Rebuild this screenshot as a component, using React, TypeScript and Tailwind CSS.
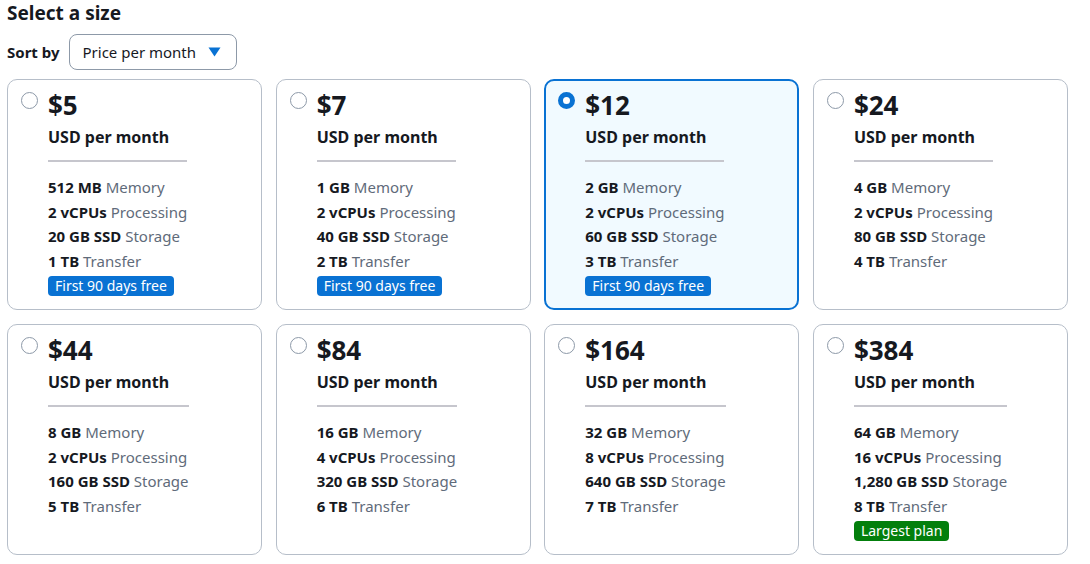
import React, { useState } from "react";

type Plan = {
  price: string;
  memory: string;
  cpus: string;
  storage: string;
  transfer: string;
  badge?: "free" | "largest";
};

const plans: Plan[] = [
  { price: "$5", memory: "512 MB", cpus: "2 vCPUs", storage: "20 GB SSD", transfer: "1 TB", badge: "free" },
  { price: "$7", memory: "1 GB", cpus: "2 vCPUs", storage: "40 GB SSD", transfer: "2 TB", badge: "free" },
  { price: "$12", memory: "2 GB", cpus: "2 vCPUs", storage: "60 GB SSD", transfer: "3 TB", badge: "free" },
  { price: "$24", memory: "4 GB", cpus: "2 vCPUs", storage: "80 GB SSD", transfer: "4 TB" },
  { price: "$44", memory: "8 GB", cpus: "2 vCPUs", storage: "160 GB SSD", transfer: "5 TB" },
  { price: "$84", memory: "16 GB", cpus: "4 vCPUs", storage: "320 GB SSD", transfer: "6 TB" },
  { price: "$164", memory: "32 GB", cpus: "8 vCPUs", storage: "640 GB SSD", transfer: "7 TB" },
  { price: "$384", memory: "64 GB", cpus: "16 vCPUs", storage: "1,280 GB SSD", transfer: "8 TB", badge: "largest" },
];

const SpecLine = ({ value, label }: { value: string; label: string }) => (
  <p className="h-[24.5px] leading-[24.5px] text-[15px] whitespace-nowrap">
    <span className="font-bold text-[#16191f]">{value}</span>{" "}
    <span className="text-[#5f6b7a]">{label}</span>
  </p>
);

const PlanCard = ({
  plan,
  selected,
  onSelect,
}: {
  plan: Plan;
  selected: boolean;
  onSelect: () => void;
}) => (
  <div
    onClick={onSelect}
    className={
      selected
        ? "h-[231px] rounded-[10px] border-2 border-[#0972d3] bg-[#f1faff] pl-[12px] pt-[11px] flex gap-[10px] cursor-pointer"
        : "h-[231px] rounded-[10px] border border-[#b6bec9] bg-white pl-[13px] pt-[12px] flex gap-[10px] cursor-pointer"
    }
  >
    <div>
      {selected ? (
        <div className="w-[17px] h-[17px] rounded-full border-[5px] border-[#0972d3] bg-white" />
      ) : (
        <div className="w-[17px] h-[17px] rounded-full border border-[#8d99a8] bg-white" />
      )}
    </div>
    <div className="w-fit">
      <p className="text-[26px] font-bold leading-[26px] text-[#16191f] h-[28px]">{plan.price}</p>
      <p className="text-[16px] font-bold text-[#16191f] leading-[20px] mt-[7px]">USD per month</p>
      <div className="h-[2px] bg-[#c6c6cd] mt-[13px] mb-[13px]" />
      <SpecLine value={plan.memory} label="Memory" />
      <SpecLine value={plan.cpus} label="Processing" />
      <SpecLine value={plan.storage} label="Storage" />
      <SpecLine value={plan.transfer} label="Transfer" />
      {plan.badge === "free" && (
        <span className="mt-[3px] inline-block rounded-[4px] bg-[#0972d3] px-[7px] h-[20px] leading-[20px] text-[14px] text-white whitespace-nowrap">
          First 90 days free
        </span>
      )}
      {plan.badge === "largest" && (
        <span className="mt-[3px] inline-block rounded-[4px] bg-[#037f0c] px-[7px] h-[20px] leading-[20px] text-[14px] text-white whitespace-nowrap">
          Largest plan
        </span>
      )}
    </div>
  </div>
);

export default function App() {
  const [selectedPlan, setSelectedPlan] = useState(2);

  return (
    <div className="w-[1090px] h-[564px] bg-white pl-[7px] pr-[22px] font-['Noto_Sans',sans-serif] text-[#16191f]">
      <h2 className="text-[19px] font-bold leading-[26px]">Select a size</h2>
      <div className="flex items-center gap-[9px] mt-[8px]">
        <span className="text-[15px] font-bold">Sort by</span>
        <button className="w-[168px] h-[36px] rounded-[8px] border border-[#8d99a8] flex items-center justify-between pl-[13px] pr-[15px] text-[15px] text-[#16191f]">
          <span>Price per month</span>
          <svg width="13" height="10" viewBox="0 0 13 10">
            <path d="M0.5 0.5 L12.5 0.5 L6.5 9.5 Z" fill="#0972d3" />
          </svg>
        </button>
      </div>
      <div className="grid grid-cols-4 gap-x-[13.5px] gap-y-[14px] mt-[9px]">
        {plans.map((plan, i) => (
          <PlanCard
            key={plan.price}
            plan={plan}
            selected={selectedPlan === i}
            onSelect={() => setSelectedPlan(i)}
          />
        ))}
      </div>
    </div>
  );
}
